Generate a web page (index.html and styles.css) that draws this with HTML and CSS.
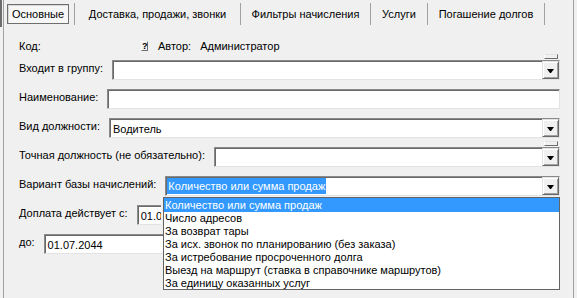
FILE: index.html
```html
<!DOCTYPE html>
<html lang="ru">
<head>
<meta charset="utf-8">
<title>Должность</title>
<link rel="stylesheet" href="styles.css">
</head>
<body>
<div class="window">
  <div class="tabs">
    <div class="tab active"><span class="focus">Основные</span></div>
    <div class="sep"></div>
    <div class="tab tab-delivery">Доставка, продажи, звонки</div>
    <div class="sep"></div>
    <div class="tab tab-filters">Фильтры начисления</div>
    <div class="sep"></div>
    <div class="tab tab-services">Услуги</div>
    <div class="sep"></div>
    <div class="tab tab-debts">Погашение долгов</div>
    <div class="sep"></div>
  </div>

  <div class="form">
    <div class="row row-code">
      <span class="lbl lbl-code">Код:</span>
      <span class="qbtn">?</span>
      <span class="lbl">Автор:</span>
      <span class="lbl author">Администратор</span>
    </div>

    <div class="row">
      <span class="lbl">Входит в группу:</span>
      <div class="field">
        <span class="mini"></span>
        <span class="ddbtn"><i class="arrow"></i></span>
      </div>
    </div>

    <div class="row">
      <span class="lbl">Наименование:</span>
      <div class="field"></div>
    </div>

    <div class="row">
      <span class="lbl">Вид должности:</span>
      <div class="field">
        <span class="val">Водитель</span>
        <span class="ddbtn"><i class="arrow"></i></span>
      </div>
    </div>

    <div class="row">
      <span class="lbl">Точная должность (не обязательно):</span>
      <div class="field">
        <span class="mini"></span>
        <span class="ddbtn"><i class="arrow"></i></span>
      </div>
    </div>

    <div class="row">
      <span class="lbl">Вариант базы начислений:</span>
      <div class="field">
        <span class="sel">Количество или сумма продаж</span>
        <span class="ddbtn"><i class="arrow"></i></span>
      </div>
    </div>

    <div class="row">
      <span class="lbl">Доплата действует с:</span>
      <div class="field clip"><span class="val">01.0</span></div>
    </div>

    <div class="row">
      <span class="lbl">до:</span>
      <div class="field short"><span class="val">01.07.2044</span></div>
    </div>
  </div>

  <ul class="droplist">
    <li class="hl">Количество или сумма продаж</li>
    <li>Число адресов</li>
    <li>За возврат тары</li>
    <li>За исх. звонок по планированию (без заказа)</li>
    <li>За истребование просроченного долга</li>
    <li>Выезд на маршрут (ставка в справочнике маршрутов)</li>
    <li>За единицу оказанных услуг</li>
  </ul>
</div>
</body>
</html>
```

FILE: styles.css
```css
* { box-sizing: border-box; }

html, body {
  margin: 0;
  padding: 0;
}

body {
  width: 577px;
  height: 298px;
  overflow: hidden;
  background: #f0f0f0;
  color: #000;
  font-family: "Liberation Sans", Arial, sans-serif;
  font-size: 11px;
}

.window {
  position: relative;
  margin-left: 3px;
  width: 571px;
  height: 298px;
  border-left: 1px solid #a0a0a0;
  border-right: 1px solid #a0a0a0;
}

.window::before {
  content: "";
  position: absolute;
  left: -4px;
  top: 0;
  width: 2px;
  height: 27px;
  background: #6d6d6d;
}

/* Tabs */
.tabs {
  display: flex;
  align-items: flex-start;
  height: 25px;
  padding-left: 3px;
}

.tab {
  height: 22px;
  margin-top: 3px;
  line-height: 22px;
  text-align: center;
  white-space: nowrap;
}

.tab-delivery { width: 165px; }
.tab-filters  { width: 129px; }
.tab-services { width: 56px; }
.tab-debts    { width: 116px; }

.tab.active {
  width: 62px;
  margin-top: 4px;
  height: 20px;
  padding: 0 1px;
  margin-right: 5px;
  border: 1px solid #6e6e6e;
  box-shadow: inset 1px 1px 0 #d8d8d8;
  background: #f7f7f7;
  line-height: 18px;
}

.tab.active .focus {
  display: block;
}

.sep {
  width: 1px;
  height: 22px;
  margin-top: 3px;
  background: #a0a0a0;
}

/* Form */
.form {
  padding: 14px 13px 0 15px;
  display: flex;
  flex-direction: column;
}

.row {
  display: flex;
  align-items: flex-start;
  gap: 9px;
  height: 20px;
  margin-top: 9px;
}

.row-code {
  height: 14px;
  margin-top: 0;
  margin-bottom: -2px;
  gap: 0;
  align-items: center;
}

.lbl {
  line-height: 14px;
  padding-top: 1px;
  white-space: nowrap;
}

.row-code .lbl { padding-top: 0; }

.lbl-code {
  width: 122px;
}

.qbtn {
  width: 7px;
  height: 10px;
  margin-right: 10px;
  font-size: 9px;
  font-weight: bold;
  line-height: 8px;
  text-align: center;
  background: #f0f0f0;
  border: 1px solid;
  border-color: #ffffff #6d6d6d #6d6d6d #ffffff;
}

.author {
  margin-left: 9px;
}

.field {
  position: relative;
  flex: 1;
  height: 20px;
  display: flex;
  align-items: stretch;
  background: #fff;
  border: 1px solid;
  border-color: #8a8a8a #e3e3e3 #e3e3e3 #8a8a8a;
  box-shadow: inset 1px 1px 0 #696969;
}

.field.short {
  flex: 0 0 120px;
}

.field.clip {
  flex: 0 0 24px;
  overflow: hidden;
  border-right: 0;
}

.val {
  padding-left: 3px;
  padding-top: 2px;
  line-height: 16px;
  white-space: nowrap;
}

.sel {
  margin: 1px 0 1px 1px;
  padding: 0 1px;
  line-height: 16px;
  background: #3399ff;
  color: #fff;
  white-space: nowrap;
}

.ddbtn {
  margin-left: auto;
  width: 17px;
  display: flex;
  align-items: center;
  justify-content: center;
  padding-top: 2px;
  background: #f0f0f0;
  border: 1px solid;
  border-color: #e3e3e3 #696969 #696969 #e3e3e3;
  box-shadow: inset 1px 1px 0 #fff, inset -1px -1px 0 #a0a0a0;
}

.arrow {
  display: block;
  width: 1px;
  height: 0;
  border-top: 4px solid #000;
  border-left: 3px solid transparent;
  border-right: 3px solid transparent;
  box-sizing: content-box;
}

.mini {
  position: absolute;
  right: 1px;
  top: -7px;
  width: 14px;
  height: 5px;
  background: #f0f0f0;
  border: 1px solid;
  border-color: #ffffff #6d6d6d #6d6d6d #ffffff;
  border-top-color: #e3e3e3;
}

/* Dropdown overlay */
.droplist {
  position: absolute;
  left: 159px;
  top: 197px;
  width: 397px;
  height: 93px;
  margin: 0;
  padding: 0;
  list-style: none;
  background: #fff;
  border: 1px solid #646464;
}

.droplist li {
  height: 13px;
  line-height: 13px;
  padding-left: 1px;
  white-space: nowrap;
}

.droplist li.hl {
  height: 14px;
  line-height: 14px;
  background: #3399ff;
  color: #fff;
}
```
